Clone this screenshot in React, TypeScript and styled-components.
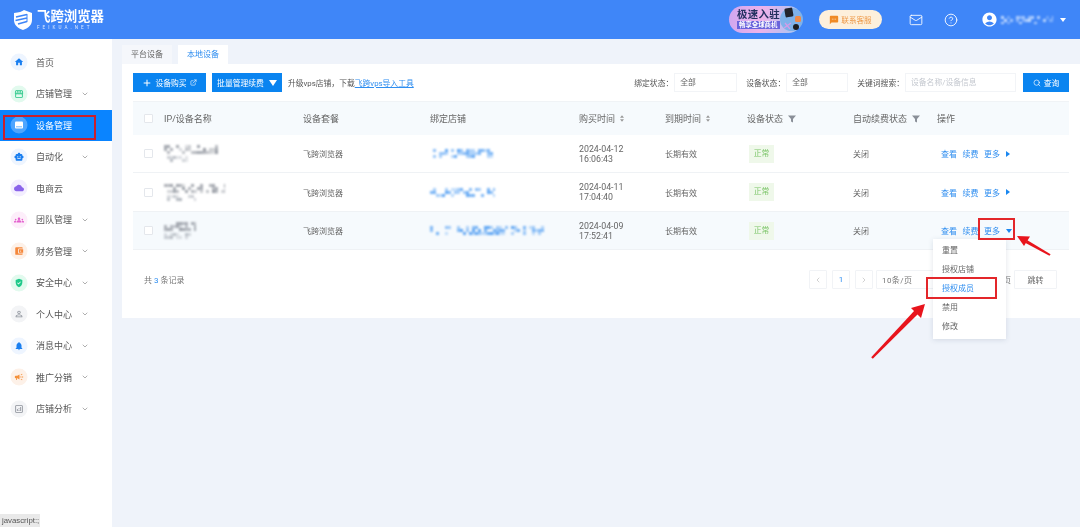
import React from "react";
import styled, { createGlobalStyle, css } from "styled-components";
import { ChevronDown, Plus, ExternalLink, Search, Mail, CircleHelp, ChevronLeft, ChevronRight } from "lucide-react";
import {
  MdHome, MdStorefront, MdSmartToy, MdCloud, MdGroups, MdAccountBalanceWallet,
  MdGppGood, MdPermIdentity, MdNotifications, MdCampaign, MdOutlineAnalytics, MdSms, MdAccountCircle,
} from "react-icons/md";

const Global = createGlobalStyle`
  html, body { margin: 0; padding: 0; background: #fff; }
  body { font-family: Roboto, "Noto Sans CJK SC", sans-serif; overflow: hidden; }
  * { box-sizing: border-box; }
`;

const Page = styled.div`
  position: relative;
  width: 1080px;
  height: 527px;
  overflow: hidden;
  display: flex;
  flex-direction: column;
  background: #eff3fa;
  filter: blur(0.3px);
`;

const Header = styled.header`
  height: 39px;
  flex: none;
  background: #3f86f8;
  display: flex;
  align-items: center;
  padding: 0 14px 0 13px;
  color: #fff;
`;
const Brand = styled.div`
  display: flex;
  align-items: center;
  gap: 4px;
`;
const BrandText = styled.div`
  display: flex;
  flex-direction: column;
  align-items: flex-start;
`;
const BrandName = styled.div`
  font-size: 13.4px;
  line-height: 16px;
  font-weight: 700;
`;
const BrandSub = styled.div`
  font-size: 4.6px;
  line-height: 6px;
  letter-spacing: 3.05px;
  opacity: 0.8;
`;
const HeaderRight = styled.div`
  margin-left: auto;
  display: flex;
  align-items: center;
`;
const Promo = styled.div`
  position: relative;
  width: 73px;
  height: 27px;
  margin-right: 17px;
  padding: 2px 0 0 8px;
  border-radius: 14px;
  background: linear-gradient(100deg, #cfa6f0 0%, #eeb2ea 45%, #9cc8f3 100%);
`;
const PromoTitle = styled.div`
  font-size: 10.4px;
  line-height: 13px;
  font-weight: 700;
  letter-spacing: 0.4px;
  color: #23305f;
`;
const PromoSub = styled.div`
  width: 43px;
  font-size: 6.4px;
  line-height: 8px;
  font-weight: 700;
  color: #fff;
  background: #6a63dc;
  padding-left: 2px;
  white-space: nowrap;
`;
const PromoArt = styled.svg`
  position: absolute;
  right: -2px;
  top: 1px;
`;
const Contact = styled.div`
  width: 63px;
  height: 19px;
  margin-right: 27px;
  border-radius: 10px;
  background: #fdf0dc;
  color: #ee9a4a;
  font-size: 7.6px;
  display: flex;
  align-items: center;
  justify-content: center;
  gap: 2px;
`;
const HeaderIcon = styled.div<{ $gap: number }>`
  display: flex;
  margin-right: ${p => p.$gap}px;
`;
const Caret = styled.span<{ $dir?: "right" | "down"; $color?: string; $big?: boolean }>`
  display: inline-block;
  width: 0;
  height: 0;
  ${p => p.$dir === "right"
    ? css`border-top: 3px solid transparent; border-bottom: 3px solid transparent; border-left: 4px solid ${p.$color || "#1a87f0"};`
    : p.$big
      ? css`border-left: 4px solid transparent; border-right: 4px solid transparent; border-top: 6px solid ${p.$color || "#1a87f0"};`
      : css`border-left: 3.5px solid transparent; border-right: 3.5px solid transparent; border-top: 4px solid ${p.$color || "#1a87f0"};`}
`;

const Body = styled.div`
  flex: 1;
  display: flex;
  min-height: 0;
`;
const Sidebar = styled.nav`
  width: 112px;
  flex: none;
  background: #fff;
  padding-top: 7.5px;
`;
const NavItem = styled.div<{ $active?: boolean }>`
  height: 31.5px;
  display: flex;
  align-items: center;
  padding-left: 11px;
  font-size: 9px;
  color: ${p => (p.$active ? "#fff" : "#555")};
  background: ${p => (p.$active ? "#0a84ff" : "transparent")};
`;
const NavIcon = styled.span<{ $bg: string; $fg: string }>`
  width: 16px;
  height: 16px;
  border-radius: 50%;
  margin-right: 9px;
  flex: none;
  display: flex;
  align-items: center;
  justify-content: center;
  background: ${p => p.$bg};
  color: ${p => p.$fg};
  box-shadow: 0 0 0 0.5px ${p => p.$bg};
`;
const NavLabel = styled.span`
  width: 36px;
  white-space: nowrap;
`;
const NavChevron = styled.span`
  display: flex;
  margin-left: 9px;
  color: #888;
`;

const Main = styled.main`
  flex: 1;
  padding-top: 6px;
  padding-left: 10px;
  min-width: 0;
`;
const Tabs = styled.div`
  display: flex;
  gap: 6px;
  height: 19px;
`;
const Tab = styled.div<{ $active?: boolean }>`
  width: 50px;
  text-align: center;
  font-size: 8px;
  line-height: 19px;
  color: ${p => (p.$active ? "#2f8ef0" : "#666")};
  background: ${p => (p.$active ? "#fff" : "#f5f7fb")};
`;
const Panel = styled.section`
  height: 254px;
  background: #fff;
  padding: 9px 11px 0;
`;
const Toolbar = styled.div`
  height: 19px;
  display: flex;
  align-items: center;
  font-size: 8px;
  color: #555;
  margin-bottom: 9px;
`;
const PrimaryButton = styled.div<{ $w: number; $mr: number; $gap?: number }>`
  width: ${p => p.$w}px;
  height: 19px;
  margin-right: ${p => p.$mr}px;
  background: #0a84f0;
  color: #fff;
  font-size: 7.8px;
  display: flex;
  align-items: center;
  justify-content: center;
  gap: ${p => p.$gap ?? 3}px;
  flex: none;
`;
const Hint = styled.span`
  white-space: nowrap;
  font-size: 7.8px;
`;
const HintLink = styled.span`
  color: #2f8ef0;
  text-decoration: underline;
`;
const FilterGroup = styled.div`
  margin-left: auto;
  display: flex;
  align-items: center;
`;
const FilterLabel = styled.span`
  font-size: 7.8px;
  white-space: nowrap;
  color: #555;
  margin-right: 1px;
`;
const FilterBox = styled.div<{ $w: number; $mr: number; $muted?: boolean }>`
  width: ${p => p.$w}px;
  height: 19px;
  margin-right: ${p => p.$mr}px;
  border: 1px solid #f2f4f7;
  font-size: 7.8px;
  line-height: 17px;
  padding-left: 5px;
  color: ${p => (p.$muted ? "#c4c8cf" : "#666")};
  white-space: nowrap;
`;
const SearchButton = styled(PrimaryButton)`
  margin-right: 0;
`;

const GRID = "31px 139px 127px 149px 86px 82px 106px 84px 132px";
const HeadRow = styled.div`
  display: grid;
  grid-template-columns: ${GRID};
  height: 34px;
  align-items: center;
  background: #f6fafd;
  border-top: 1px solid #f0f3f6;
  font-size: 9px;
  color: #666;
`;
const BodyRow = styled.div<{ $h: number; $hover?: boolean }>`
  display: grid;
  grid-template-columns: ${GRID};
  height: ${p => p.$h}px;
  align-items: center;
  font-size: 8px;
  color: #666;
  border-bottom: 1px solid #eff2f5;
  background: ${p => (p.$hover ? "#f6fafd" : "#fff")};
`;
const CheckCell = styled.div`
  padding-left: 11px;
  display: flex;
`;
const Check = styled.span`
  width: 9px;
  height: 9px;
  border: 1px solid #e4e7ec;
  border-radius: 1px;
  background: #fff;
`;
const HeadCell = styled.div`
  display: flex;
  align-items: center;
  gap: 5px;
  white-space: nowrap;
`;
const Cell = styled.div`
  white-space: nowrap;
`;
const Stack = styled.div`
  display: flex;
  flex-direction: column;
  align-items: flex-start;
  gap: 2px;
`;
const TimeCell = styled.div`
  font-size: 8.8px;
  line-height: 10px;
  color: #666;
`;
const StatusTag = styled.span`
  display: inline-block;
  margin-left: 2px;
  width: 25px;
  height: 18px;
  line-height: 18px;
  text-align: center;
  font-size: 7.8px;
  background: #eff8ea;
  color: #7cc569;
`;
const Actions = styled.div`
  display: flex;
  align-items: center;
  gap: 5.5px;
  padding-left: 4px;
  font-size: 8px;
  color: #2f8ef0;
`;
const Pager = styled.div`
  display: flex;
  align-items: center;
  height: 19px;
  margin-top: 20px;
  padding: 0 12px 0 11px;
  font-size: 8px;
  color: #777;
`;
const Count = styled.b`
  font-weight: 400;
  color: #2f8ef0;
  padding: 0 2px;
`;
const PagerRight = styled.div`
  margin-left: auto;
  display: flex;
  align-items: center;
  gap: 5px;
`;
const PageBox = styled.div<{ $w?: number; $blue?: boolean; $left?: boolean }>`
  width: ${p => p.$w || 18}px;
  height: 19px;
  border: 1px solid #f1f3f6;
  border-radius: 1px;
  color: ${p => (p.$blue ? "#2f8ef0" : "#bbb")};
  font-size: 8px;
  display: flex;
  align-items: center;
  justify-content: ${p => (p.$left ? "flex-start" : "center")};
  padding-left: ${p => (p.$left ? 5 : 0)}px;
`;
const PageSelect = styled(PageBox)`
  color: #777;
  margin-left: -2px;
  letter-spacing: 0.4px;
`;
const JumpText = styled.span`
  color: #777;
  margin-left: 62px;
  margin-right: -2px;
`;
const JumpButton = styled(PageBox)`
  color: #666;
`;

const Menu = styled.div`
  position: absolute;
  left: 933px;
  top: 239px;
  width: 73px;
  height: 100px;
  padding-top: 1.5px;
  background: #fff;
  box-shadow: 0 1px 5px rgba(60, 80, 110, 0.16);
  font-size: 8px;
  color: #666;
`;
const MenuItem = styled.div<{ $active?: boolean }>`
  height: 19px;
  line-height: 19px;
  padding-left: 9px;
  color: ${p => (p.$active ? "#2f8ef0" : "#666")};
`;
const Mark = styled.div<{ $l: number; $t: number; $w: number; $h: number; $c: string }>`
  position: absolute;
  left: ${p => p.$l}px;
  top: ${p => p.$t}px;
  width: ${p => p.$w}px;
  height: ${p => p.$h}px;
  border: 2px solid ${p => p.$c};
`;
const ArrowLayer = styled.svg`
  position: absolute;
  left: 0;
  top: 0;
  pointer-events: none;
`;
const StatusBar = styled.div`
  position: absolute;
  left: 0;
  bottom: 0;
  width: 40px;
  height: 13px;
  padding-left: 2px;
  font-size: 7.8px;
  line-height: 13px;
  font-family: "Liberation Sans", sans-serif;
  color: #555;
  background: #e9e9e9;
  white-space: nowrap;
`;
const MosaicSvg = styled.svg`
  display: block;
  filter: blur(1px);
`;

function Mosaic({ w, h, color, seed }: { w: number; h: number; color: string; seed: number }) {
  const cells: React.ReactNode[] = [];
  let s = seed;
  const step = 3;
  for (let y = 0; y < h; y += step) {
    for (let x = 0; x < w; x += step) {
      s = (s * 9301 + 49297) % 233280;
      const v = s / 233280;
      if (v > 0.5) cells.push(<rect key={`${x}-${y}`} x={x} y={y} width={step} height={step} fill={color} opacity={0.3 + (v - 0.5) * 1.2} />);
    }
  }
  return <MosaicSvg width={w} height={h}>{cells}</MosaicSvg>;
}

function SortIcon() {
  return (
    <svg width="4" height="7" viewBox="0 0 5 8">
      <path d="M2.5 0 5 3H0zM2.5 8 0 5h5z" fill="#999" />
    </svg>
  );
}
function FunnelIcon() {
  return (
    <svg width="8" height="8" viewBox="0 0 8 8">
      <path d="M0 .5h8L5 4v3.5L3 6.5V4z" fill="#8a8f98" />
    </svg>
  );
}
function DeviceIcon({ size }: { size: number }) {
  return (
    <svg width={size} height={size} viewBox="0 0 10 10">
      <rect x="1" y="1.5" width="8" height="7" rx="1" fill="#fff" />
      <path d="M2 6.8h6" stroke="#4ea5ff" strokeWidth="0.8" />
    </svg>
  );
}

const NAV = [
  { label: "首页", icon: MdHome, bg: "#eef5ff", fg: "#1a7ff0" },
  { label: "店铺管理", icon: MdStorefront, bg: "#e2faee", fg: "#22c584", more: true },
  { label: "设备管理", icon: DeviceIcon, bg: "#4ea5ff", fg: "#fff", active: true },
  { label: "自动化", icon: MdSmartToy, bg: "#eef5ff", fg: "#1a7ff0", more: true },
  { label: "电商云", icon: MdCloud, bg: "#f3eeff", fg: "#8a63ea" },
  { label: "团队管理", icon: MdGroups, bg: "#fdeefa", fg: "#e35fce", more: true },
  { label: "财务管理", icon: MdAccountBalanceWallet, bg: "#fdf1e8", fg: "#f5873a", more: true },
  { label: "安全中心", icon: MdGppGood, bg: "#e2faee", fg: "#1fc98a", more: true },
  { label: "个人中心", icon: MdPermIdentity, bg: "#f3f4f6", fg: "#8a8f98", more: true },
  { label: "消息中心", icon: MdNotifications, bg: "#eef5ff", fg: "#1a7ff0", more: true },
  { label: "推广分销", icon: MdCampaign, bg: "#fdf1e8", fg: "#f5913a", more: true },
  { label: "店铺分析", icon: MdOutlineAnalytics, bg: "#f3f4f6", fg: "#8a8f98", more: true },
];

const ROWS = [
  { h: 38, nameW: 61, subW: 32, storeW: 63, date: "2024-04-12", time: "16:06:43", seed: 17, caret: "right" as const },
  { h: 39, nameW: 61, subW: 32, storeW: 65, date: "2024-04-11", time: "17:04:40", seed: 91, caret: "right" as const },
  { h: 38, nameW: 32, subW: 27, storeW: 114, date: "2024-04-09", time: "17:52:41", seed: 203, caret: "down" as const, hover: true },
];

export default function App() {
  return (
    <Page>
      <Global />
      <Header>
        <Brand>
          <svg width="20" height="22" viewBox="0 0 20 22">
            <path d="M1 4 C6 3.5 9 2.5 11 1 L19 4 L19 11 C19 16 15 19.5 10 21 C5 19.5 1 16 1 11Z" fill="#fff" />
            <path d="M3 8 L14 5.5 M2.5 11.5 L14 9 M5 15 L14 12.5" stroke="#3f86f8" strokeWidth="1.7" fill="none" />
            <path d="M14 5v8" stroke="#3f86f8" strokeWidth="1" />
          </svg>
          <BrandText>
            <BrandName>飞跨浏览器</BrandName>
            <BrandSub>FEIKUA.NET</BrandSub>
          </BrandText>
        </Brand>
        <HeaderRight>
          <Promo>
            <PromoTitle>极速入驻</PromoTitle>
            <PromoSub>畅享全球商机</PromoSub>
            <PromoArt width="25" height="25" viewBox="0 0 25 25">
              <circle cx="12.5" cy="12.5" r="11.5" fill="#7fb2ea" />
              <rect x="6" y="1" width="8" height="9" rx="1.5" fill="#22242c" transform="rotate(-10 10 6)" />
              <rect x="16" y="9" width="6" height="6" rx="1.5" fill="#ef8a4a" />
              <circle cx="17" cy="20" r="3" fill="#1c1c20" />
              <path d="M5 21 L12 16 M6 16 L11 22" stroke="#d59be8" strokeWidth="1.2" />
            </PromoArt>
          </Promo>
          <Contact>
            <MdSms size={10} color="#f08a24" />
            联系客服
          </Contact>
          <HeaderIcon $gap={21}><Mail size={14} strokeWidth={1.5} /></HeaderIcon>
          <HeaderIcon $gap={23}><CircleHelp size={14} strokeWidth={1.5} /></HeaderIcon>
          <HeaderIcon $gap={3}><MdAccountCircle size={17} /></HeaderIcon>
          <HeaderIcon $gap={7}><Mosaic w={52} h={8} color="#d8e8ff" seed={44} /></HeaderIcon>
          <Caret $color="#fff" />
        </HeaderRight>
      </Header>
      <Body>
        <Sidebar>
          {NAV.map(n => {
            const Icon = n.icon;
            return (
              <NavItem key={n.label} $active={n.active}>
                <NavIcon $bg={n.bg} $fg={n.fg}><Icon size={10} /></NavIcon>
                <NavLabel>{n.label}</NavLabel>
                {n.more && <NavChevron><ChevronDown size={8} /></NavChevron>}
              </NavItem>
            );
          })}
        </Sidebar>
        <Main>
          <Tabs>
            <Tab>平台设备</Tab>
            <Tab $active>本地设备</Tab>
          </Tabs>
          <Panel>
            <Toolbar>
              <PrimaryButton $w={73} $mr={6}>
                <Plus size={10} strokeWidth={2.4} />设备购买<ExternalLink size={7} />
              </PrimaryButton>
              <PrimaryButton $w={70} $mr={6} $gap={5}>
                批量管理续费<Caret $color="#fff" $big />
              </PrimaryButton>
              <Hint>升级vps店铺，下载<HintLink>飞跨vps导入工具</HintLink></Hint>
              <FilterGroup>
                <FilterLabel>绑定状态：</FilterLabel>
                <FilterBox $w={63} $mr={9}>全部</FilterBox>
                <FilterLabel>设备状态：</FilterLabel>
                <FilterBox $w={62} $mr={9}>全部</FilterBox>
                <FilterLabel>关键词搜索：</FilterLabel>
                <FilterBox $w={111} $mr={7} $muted>设备名称/设备信息</FilterBox>
                <SearchButton $w={46} $mr={0}><Search size={8} strokeWidth={2} />查询</SearchButton>
              </FilterGroup>
            </Toolbar>
            <HeadRow>
              <CheckCell><Check /></CheckCell>
              <HeadCell>IP/设备名称</HeadCell>
              <HeadCell>设备套餐</HeadCell>
              <HeadCell>绑定店铺</HeadCell>
              <HeadCell>购买时间<SortIcon /></HeadCell>
              <HeadCell>到期时间<SortIcon /></HeadCell>
              <HeadCell>设备状态<FunnelIcon /></HeadCell>
              <HeadCell>自动续费状态<FunnelIcon /></HeadCell>
              <HeadCell>操作</HeadCell>
            </HeadRow>
            {ROWS.map(r => (
              <BodyRow key={r.date} $h={r.h} $hover={r.hover}>
                <CheckCell><Check /></CheckCell>
                <Cell>
                  <Stack>
                    <Mosaic w={r.nameW} h={9} color="#8d929b" seed={r.seed} />
                    <Mosaic w={r.subW} h={6} color="#aab0b8" seed={r.seed + 7} />
                  </Stack>
                </Cell>
                <Cell>飞跨浏览器</Cell>
                <Cell><Mosaic w={r.storeW} h={9} color="#4a9af2" seed={r.seed + 13} /></Cell>
                <Cell><TimeCell>{r.date}<br />{r.time}</TimeCell></Cell>
                <Cell>长期有效</Cell>
                <Cell><StatusTag>正常</StatusTag></Cell>
                <Cell>关闭</Cell>
                <Actions>
                  <span>查看</span><span>续费</span><span>更多</span>
                  <Caret $dir={r.caret} />
                </Actions>
              </BodyRow>
            ))}
            <Pager>
              <span>共<Count>3</Count>条记录</span>
              <PagerRight>
                <PageBox><ChevronLeft size={8} /></PageBox>
                <PageBox $blue>1</PageBox>
                <PageBox><ChevronRight size={8} /></PageBox>
                <PageSelect $w={60} $left>10条/页</PageSelect>
                <JumpText>页</JumpText>
                <JumpButton $w={43}>跳转</JumpButton>
              </PagerRight>
            </Pager>
          </Panel>
        </Main>
      </Body>
      <Menu>
        <MenuItem>重置</MenuItem>
        <MenuItem>授权店铺</MenuItem>
        <MenuItem $active>授权成员</MenuItem>
        <MenuItem>禁用</MenuItem>
        <MenuItem>修改</MenuItem>
      </Menu>
      <Mark $l={3} $t={115} $w={93} $h={25} $c="#c8202e" />
      <Mark $l={978} $t={218} $w={37} $h={22} $c="#e3262a" />
      <Mark $l={926} $t={277} $w={71} $h={22} $c="#e3262a" />
      <ArrowLayer width="1080" height="527" viewBox="0 0 1080 527">
        <path d="M1050.6 254.2 L1027 240 L1025.6 243 L1049.4 255.8Z" fill="#e8141c" />
        <path d="M1017 236 L1030 236.5 L1024 246Z" fill="#e8141c" />
        <path d="M871.2 357.2 L915 310 L918.5 313.5 L872.8 358.8Z" fill="#e8141c" />
        <path d="M925 304 L921 318 L911 308Z" fill="#e8141c" />
      </ArrowLayer>
      <StatusBar>javascript:;</StatusBar>
    </Page>
  );
}
